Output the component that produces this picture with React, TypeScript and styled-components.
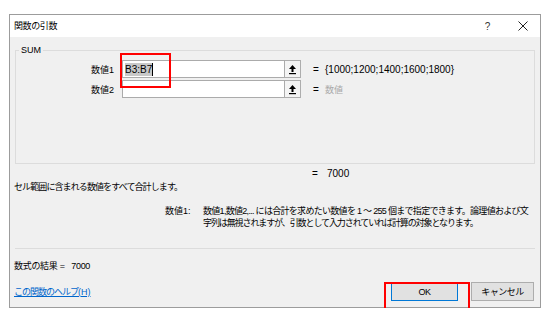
import styled, { createGlobalStyle } from 'styled-components';

const GlobalStyle = createGlobalStyle`
  body {
    margin: 0;
    background: #ffffff;
    font-family: "Liberation Sans", "Noto Sans CJK JP", sans-serif;
    font-size: 9px;
    color: #000000;
  }
`

const Page = styled.div`
  padding: 14px 0 0 9px;
`

const Dialog = styled.div`
  position: relative;
  box-sizing: border-box;
  width: 532px;
  height: 294px;
  border: 1px solid #9c9c9c;
  display: flex;
  flex-direction: column;
`

const TitleBar = styled.div`
  height: 22px;
  background: #ffffff;
  display: flex;
  align-items: center;
  padding-left: 4px;
`

const Title = styled.div`
  flex: 1;
  line-height: 12px;
  letter-spacing: -0.4px;
`

const TitleButton = styled.div`
  width: 35px;
  height: 22px;
  display: flex;
  align-items: center;
  justify-content: center;
  color: #333333;
  font-size: 10px;
`

const Body = styled.div`
  flex: 1;
  background: #f0f0f0;
  padding: 0 6px 0 4px;
  display: flex;
  flex-direction: column;
`

const GroupBox = styled.fieldset`
  box-sizing: border-box;
  margin: 7px 0 0 1px;
  padding: 4px 0 0 0;
  width: 520px;
  height: 120px;
  border: 1px solid #dcdcdc;
  min-width: 0;
  display: flex;
  flex-direction: column;
  gap: 2px;
`

const Legend = styled.legend`
  padding: 0 2px;
  margin-left: 3px;
  line-height: 12px;
`

const ArgRow = styled.div`
  display: flex;
  align-items: center;
  height: 18px;
`

const ArgLabel = styled.div`
  width: 98px;
  text-align: right;
  margin-right: 8px;
`

const InputBox = styled.div`
  box-sizing: border-box;
  width: 163px;
  height: 18px;
  border: 1px solid #ababab;
  background: #ffffff;
  display: flex;
  align-items: center;
  padding-left: 2px;
  font-size: 10px;
`

const Selected = styled.span`
  background: #c8c8c8;
  line-height: 13px;
`

const Caret = styled.span`
  display: inline-block;
  width: 1px;
  height: 13px;
  background: #000000;
`

const RefButton = styled.div`
  box-sizing: border-box;
  width: 16px;
  height: 18px;
  border: 1px solid #adadad;
  border-left: none;
  background: #f4f4f4;
  display: flex;
  align-items: center;
  justify-content: center;
`

const Eq = styled.span<{ $gap?: number }>`
  display: inline-block;
  width: ${(p) => (p.$gap === undefined ? 12 : 15)}px;
  margin-left: ${(p) => p.$gap ?? 12}px;
  font-size: 10px;
`

const Value = styled.span<{ $muted?: boolean }>`
  font-size: ${(p) => (p.$muted ? '9px' : '10px')};
  color: ${(p) => (p.$muted ? '#a8a8a8' : '#000000')};
`

const ResultLine = styled.div`
  margin-top: 4px;
  height: 12px;
  line-height: 12px;
  padding-left: 298px;
  display: flex;
`

const Text = styled.div<{ $top: number; $ls?: number }>`
  margin-top: ${(p) => p.$top}px;
  line-height: 12px;
  letter-spacing: ${(p) => p.$ls ?? 0}px;
`

const ArgHelp = styled.div`
  margin-top: 12px;
  display: flex;
  line-height: 12px;
`

const ArgHelpLabel = styled.div`
  width: 38px;
  margin-left: 151px;
`

const ArgHelpText = styled.div`
  width: 331px;
  white-space: nowrap;
  display: flex;
  flex-direction: column;
`

const HelpLine = styled.span<{ $ls: number }>`
  letter-spacing: ${(p) => p.$ls}px;
`

const Separator = styled.div`
  margin: 19px 0 0 1px;
  width: 520px;
  height: 1px;
  background: #dcdcdc;
`

const Footer = styled.div`
  margin-top: 10px;
  height: 19px;
  display: flex;
  align-items: center;
`

const HelpLink = styled.a`
  color: #0066cc;
  text-decoration: underline;
  line-height: 12px;
  letter-spacing: -1px;
  margin-right: auto;
`

const LinkKey = styled.span`
  letter-spacing: 0;
`

const Button = styled.div<{ $default?: boolean; $w: number }>`
  box-sizing: border-box;
  width: ${(p) => p.$w}px;
  height: 19px;
  margin-left: 13px;
  background: #e1e1e1;
  border: 1px solid ${(p) => (p.$default ? '#0078d7' : '#adadad')};
  display: flex;
  align-items: center;
  justify-content: center;
  font-size: 9px;
  letter-spacing: -0.5px;
`

const Highlight = styled.div<{ $x: number; $y: number; $w: number; $h: number }>`
  position: absolute;
  box-sizing: border-box;
  left: ${(p) => p.$x}px;
  top: ${(p) => p.$y}px;
  width: ${(p) => p.$w}px;
  height: ${(p) => p.$h}px;
  border: 2px solid #ff0000;
  pointer-events: none;
`

function RefIcon() {
  return (
    <svg width="9" height="11" viewBox="0 0 9 11">
      <path d="M4.5 1 L1 5 L8 5 Z" fill="#000" />
      <rect x="3.5" y="4.5" width="2" height="3.5" fill="#000" />
      <rect x="1" y="9" width="7" height="1.2" fill="#000" />
    </svg>
  )
}

function CloseIcon() {
  return (
    <svg width="10" height="10" viewBox="0 0 10 10">
      <path d="M0.5 0.5 L9.5 9.5 M9.5 0.5 L0.5 9.5" stroke="#222" strokeWidth="1" />
    </svg>
  )
}

export default function App() {
  return (
    <>
      <GlobalStyle />
      <Page>
        <Dialog>
          <TitleBar>
            <Title>関数の引数</Title>
            <TitleButton>?</TitleButton>
            <TitleButton><CloseIcon /></TitleButton>
          </TitleBar>
          <Body>
            <GroupBox>
              <Legend>SUM</Legend>
              <ArgRow>
                <ArgLabel>数値1</ArgLabel>
                <InputBox><Selected>B3:B7</Selected><Caret /></InputBox>
                <RefButton><RefIcon /></RefButton>
                <Eq>=</Eq>
                <Value>{'{1000;1200;1400;1600;1800}'}</Value>
              </ArgRow>
              <ArgRow>
                <ArgLabel>数値2</ArgLabel>
                <InputBox />
                <RefButton><RefIcon /></RefButton>
                <Eq>=</Eq>
                <Value $muted>数値</Value>
              </ArgRow>
            </GroupBox>
            <ResultLine>
              <Eq $gap={0}>=</Eq>
              <Value>7000</Value>
            </ResultLine>
            <Text $top={1} $ls={-0.9}>セル範囲に含まれる数値をすべて合計します。</Text>
            <ArgHelp>
              <ArgHelpLabel>数値1:</ArgHelpLabel>
              <ArgHelpText>
                <HelpLine $ls={-0.7}>数値1,数値2,... には合計を求めたい数値を 1 ～ 255 個まで指定できます。論理値および文</HelpLine>
                <HelpLine $ls={-1.1}>字列は無視されますが、引数として入力されていれば計算の対象となります。</HelpLine>
              </ArgHelpText>
            </ArgHelp>
            <Separator />
            <Text $top={11} $ls={-0.3}>数式の結果 =&nbsp;&nbsp;&nbsp;7000</Text>
            <Footer>
              <HelpLink href="#">この関数のヘルプ<LinkKey>(H)</LinkKey></HelpLink>
              <Button $default $w={67}>OK</Button>
              <Button $w={63}>キャンセル</Button>
            </Footer>
          </Body>
          <Highlight $x={110} $y={38} $w={51} $h={35} />
          <Highlight $x={374} $y={267} $w={86} $h={33} />
        </Dialog>
      </Page>
    </>
  );
}
